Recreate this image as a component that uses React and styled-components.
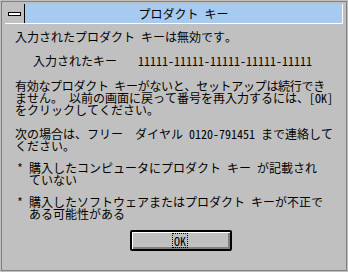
import React from "react";
import styled, { createGlobalStyle } from "styled-components";

const Global = createGlobalStyle`
  html, body { margin: 0; padding: 0; background: #c0c0c0; }
  body {
    font-family: "Noto Sans Mono CJK JP", "Noto Sans CJK JP", monospace;
    font-size: 12px;
    color: #000;
  }
`;

const Window = styled.div`
  width: 348px;
  height: 272px;
  box-sizing: border-box;
  padding: 1px;
  background: #c0c0c0;
`;

const Frame = styled.div`
  height: 100%;
  box-sizing: border-box;
  border: 1px solid #808080;
  padding: 2px 3px 0 3px;
  display: flex;
  flex-direction: column;
`;

const TitleBar = styled.div`
  display: flex;
  height: 20px;
  box-sizing: border-box;
  border-bottom: 1px solid #fff;
  border-right: 1px solid #fff;
`;

const SysBox = styled.div`
  width: 19px;
  border-right: 1px solid #000;
  background: #c0c0c0;
  display: flex;
  align-items: center;
  justify-content: center;
`;

const SysBar = styled.div`
  width: 13px;
  height: 4px;
  box-sizing: border-box;
  border: 1px solid #000;
  background: #fff;
  margin-top: 1px;
`;

const Title = styled.div`
  flex: 1;
  background: #a6caf0;
  display: flex;
  align-items: center;
  justify-content: center;
  line-height: 12px;
  white-space: pre;
`;

const Content = styled.div`
  padding: 7px 0 0 10px;
  display: flex;
  flex-direction: column;
  line-height: 12px;
  white-space: pre;
`;

const Block = styled.div`
  margin-top: ${(p) => p.$gap || 0}px;
`;

const Tight = styled.span`
  letter-spacing: -0.3px;
`;

const KeyRow = styled.div`
  display: flex;
  margin-top: 12px;
  padding-left: 18px;
`;

const KeyLabel = styled.span`
  width: 105px;
`;

const Bullet = styled.div`
  display: grid;
  grid-template-columns: 12px auto;
  padding-left: 2px;
  margin-top: 10px;
`;

const ButtonRow = styled.div`
  display: flex;
  padding-left: 115px;
  margin-top: 10px;
`;

const Button = styled.div`
  width: 102px;
  height: 21px;
  box-sizing: border-box;
  border: 2px solid #000;
  border-radius: 2px;
  background: #c0c0c0;
  box-shadow: inset 1px 1px 0 #fff, inset -2px -2px 0 #808080;
  display: flex;
  align-items: center;
  justify-content: center;
`;

const Focus = styled.span`
  border: 1px dotted #000;
  padding: 0 1px;
  height: 15px;
  box-sizing: border-box;
  line-height: 12px;
  display: flex;
  align-items: center;
  margin: 0 0 0 -2px;
`;

export default function App() {
  return (
    <>
      <Global />
      <Window>
        <Frame>
          <TitleBar>
            <SysBox>
              <SysBar />
            </SysBox>
            <Title>プロダクト キー</Title>
          </TitleBar>
          <Content>
            <Block>入力されたプロダクト キーは無効です。</Block>
            <KeyRow>
              <KeyLabel>入力されたキー</KeyLabel>
              <span>11111-11111-11111-11111-11111</span>
            </KeyRow>
            <Block $gap={13}>
              <Tight>有効なプロダクト キーがないと、セットアップは続行でき</Tight>
              <br />
              ません。 以前の画面に戻って番号を再入力するには、[OK]
              <br />
              をクリックしてください。
            </Block>
            <Block $gap={12}>
              次の場合は、フリー  ダイヤル 0120-791451 まで連絡して
              <br />
              ください。
            </Block>
            <Bullet>
              <span>*</span>
              <span>
                購入したコンピュータにプロダクト キー が記載され
                <br />
                ていない
              </span>
            </Bullet>
            <Bullet>
              <span>*</span>
              <span>
                購入したソフトウェアまたはプロダクト キーが不正で
                <br />
                ある可能性がある
              </span>
            </Bullet>
            <ButtonRow>
              <Button>
                <Focus>OK</Focus>
              </Button>
            </ButtonRow>
          </Content>
        </Frame>
      </Window>
    </>
  );
}
